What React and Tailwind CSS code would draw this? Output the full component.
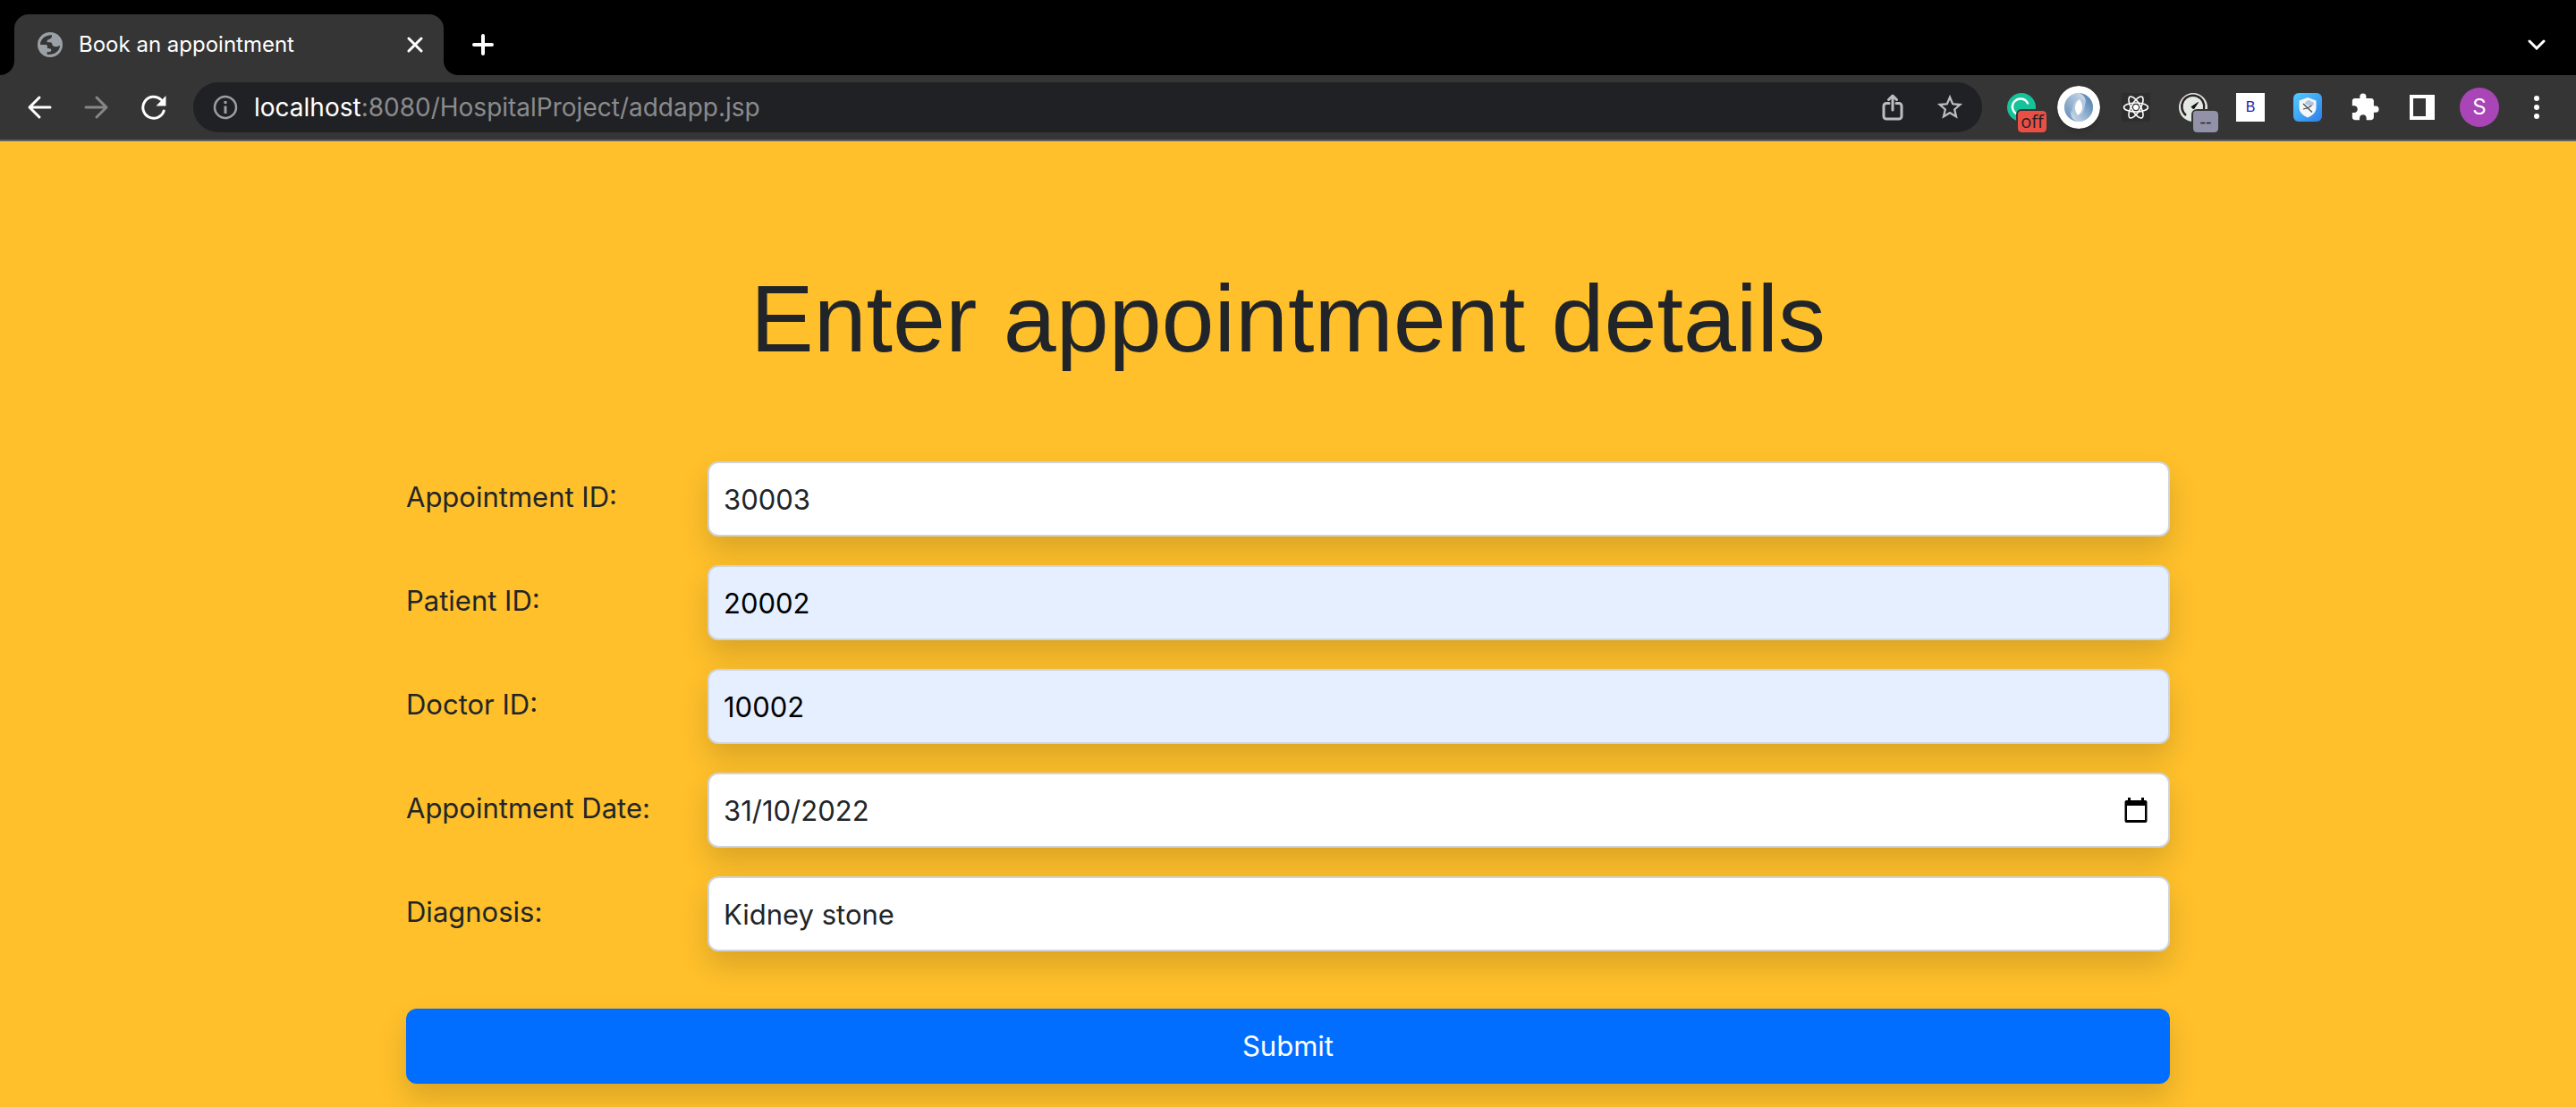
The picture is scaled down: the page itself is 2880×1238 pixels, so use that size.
import React from "react";

const FONT = "font-['Inter',sans-serif]";

function IconButton({ label, children }) {
  return (
    <button type="button" aria-label={label} className="relative flex h-14 w-16 shrink-0 items-center justify-center">
      {children}
    </button>
  );
}

function TabFoot({ flip }) {
  return (
    <svg width="16" height="16" viewBox="0 0 16 16" aria-hidden="true" className={flip ? "-scale-x-100" : ""}>
      <path d="M16 0v16H0A16 16 0 0 0 16 0Z" fill="#353535" />
    </svg>
  );
}

function TabStrip() {
  return (
    <div className="flex h-21 items-end bg-black pr-3">
      <TabFoot />
      <div className="flex h-17 w-120 items-center rounded-t-2xl bg-[#353535] pr-5 pl-6">
        <svg width="32" height="32" viewBox="-6 -6 96 96" aria-hidden="true">
          <circle cx="42" cy="42" r="42" fill="#9aa0a6" />
          <path d="M9 42C9 25 24 9 48 10Q50 20 38 24Q30 27 32 34H44Q50 36 50 44Q60 54 75 44C75 60 62 76 32 75V66Q46 68 46 60Q46 53 32 54Q36 42 26 42Z" fill="#353535" />
        </svg>
        <span className="ml-4 flex-1 text-2xl text-white">Book an appointment</span>
        <button type="button" aria-label="Close tab" className="flex h-6 w-6 items-center justify-center">
          <svg width="18" height="18" viewBox="0 0 18 18" stroke="#fff" strokeWidth="3" strokeLinecap="round">
            <path d="M2 2l14 14M16 2L2 16" />
          </svg>
        </button>
      </div>
      <TabFoot flip />
      <div className="flex h-17 flex-1 items-center justify-between">
        <button type="button" aria-label="New tab" className="flex h-14 w-14 items-center justify-center">
          <svg width="26" height="26" viewBox="0 0 26 26" stroke="#fff" strokeWidth="4" strokeLinecap="round">
            <path d="M13 3v20M3 13h20" />
          </svg>
        </button>
        <IconButton label="Search tabs">
          <svg width="20" height="12" viewBox="0 0 20 12" fill="none" stroke="#fff" strokeWidth="3" strokeLinecap="round">
            <path d="M2 2l8 8 8-8" />
          </svg>
        </IconButton>
      </div>
    </div>
  );
}

function Toolbar() {
  return (
    <div className="flex h-[74px] items-center border-b-2 border-[#5f6064] bg-[#353535] px-3">
      <IconButton label="Back">
        <svg width="28" height="28" viewBox="0 0 28 28" fill="none" stroke="#fff" strokeWidth="3" strokeLinecap="round" strokeLinejoin="round">
          <path d="M26 14H3M14 3L3 14l11 11" />
        </svg>
      </IconButton>
      <IconButton label="Forward">
        <svg width="28" height="28" viewBox="0 0 28 28" fill="none" stroke="#868686" strokeWidth="3" strokeLinecap="round" strokeLinejoin="round">
          <path d="M2 14h23M14 3l11 11-11 11" />
        </svg>
      </IconButton>
      <IconButton label="Reload">
        <svg width="28" height="28" viewBox="0 0 28 28" fill="none">
          <path d="M25.200 18A12 12 0 1 1 22 5.500" stroke="#fff" strokeWidth="3" strokeLinecap="round" />
          <path d="M27.500 1v11.500H16.500Z" fill="#fff" />
        </svg>
      </IconButton>
      <div className="mx-3 flex h-14 min-w-0 flex-1 items-center rounded-full bg-[#202124] pr-1 pl-1">
        <button type="button" aria-label="View site information" className="flex h-14 w-16 shrink-0 items-center justify-center">
          <svg width="28" height="28" viewBox="0 0 28 28" fill="none" stroke="#9aa0a6" strokeWidth="2.500">
            <circle cx="14" cy="14" r="12" />
            <path d="M14 12.500V21M14 7v3" strokeWidth="3" />
          </svg>
        </button>
        <a href="http://localhost:8080/HospitalProject/addapp.jsp" className="min-w-0 flex-1 truncate text-[28px] leading-10 text-[#8b8b8d]">
          <span className="text-white">localhost</span>:8080/HospitalProject/addapp.jsp
        </a>
        <IconButton label="Share">
          <svg width="24" height="30" viewBox="0 0 24 30" fill="none" stroke="#bdbdbe" strokeWidth="3" strokeLinecap="round" strokeLinejoin="round">
            <path d="M8 10.500H5a3 3 0 0 0-3 3V25a3 3 0 0 0 3 3h14a3 3 0 0 0 3-3V13.500a3 3 0 0 0-3-3h-3M12 18V2.500M7.500 6.500L12 2l4.500 4.500" />
          </svg>
        </IconButton>
        <IconButton label="Bookmark this tab">
          <svg width="34" height="34" viewBox="0 0 24 24" fill="#bdbdbe">
            <path d="M22 9.240l-7.190-.62L12 2 9.190 8.630 2 9.240l5.460 4.730L5.820 21 12 17.270 18.180 21l-1.630-7.030L22 9.240zM12 15.400l-3.760 2.270 1-4.280-3.320-2.880 4.380-.38L12 6.100l1.710 4.040 4.380.38-3.320 2.880 1 4.280L12 15.400z" />
          </svg>
        </IconButton>
      </div>
      <IconButton label="Grammarly">
        <svg width="32" height="32" viewBox="0 0 32 32" fill="none">
          <circle cx="16" cy="16" r="16" fill="#15c39a" />
          <path d="M23 11.500A9 9 0 1 0 12 24" stroke="#fff" strokeWidth="2.500" strokeLinecap="round" />
        </svg>
        <span className="absolute right-1 bottom-0 flex h-6 w-8 items-center justify-center rounded-sm bg-[#e94f45] font-['Open_Sans',sans-serif] text-xl leading-6 text-[#202124] outline-2 outline-[#353535]">off</span>
      </IconButton>
      <IconButton label="Loader">
        <svg width="48" height="48" viewBox="0 0 48 48" className="rounded-full shadow-md">
          <defs>
            <linearGradient id="swirlA" x1="0" y1="1" x2="1" y2="0"><stop offset="0" stopColor="#5f88b4" /><stop offset="1" stopColor="#d6e2ef" /></linearGradient>
            <linearGradient id="swirlB" x1="0" y1="1" x2="1" y2="0"><stop offset="0" stopColor="#d6e2ef" /><stop offset="1" stopColor="#3f74a8" /></linearGradient>
          </defs>
          <circle cx="24" cy="24" r="24" fill="#fff" />
          <circle cx="24" cy="24" r="16" fill="#b4c9df" />
          <path d="M25 8C14 8 8 16 8 24s6 15 15 16c-6-3-8-8-6-13 1-7 2-12 9-12 6 0 7 5 5 9 4-8 1-14-6-16Z" fill="url(#swirlA)" />
          <path d="M23 40c11 0 17-8 17-16S34 9 25 8c6 3 8 8 6 13-1 7-2 12-9 12-6 0-7-5-5-9-4 8-1 14 6 16Z" fill="url(#swirlB)" />
          <path d="M25 15c-4 3-5 6-5 9s1 6 3 9c4-3 5-6 5-9s-1-6-3-9Z" fill="#fff" />
        </svg>
      </IconButton>
      <IconButton label="React Developer Tools">
        <svg width="32" height="32" viewBox="0 0 32 32" fill="none" stroke="#fff" strokeWidth="1.600">
          <rect width="32" height="32" fill="#2e2e2e" stroke="none" />
          <ellipse cx="16" cy="16" rx="13.500" ry="5" />
          <ellipse cx="16" cy="16" rx="13.500" ry="5" transform="rotate(60 16 16)" />
          <ellipse cx="16" cy="16" rx="13.500" ry="5" transform="rotate(120 16 16)" />
          <circle cx="16" cy="16" r="3" fill="#fff" stroke="none" />
        </svg>
      </IconButton>
      <IconButton label="Page speed">
        <svg width="32" height="32" viewBox="0 0 32 32" fill="none">
          <circle cx="16" cy="16" r="16" fill="#e4e8e4" />
          <path d="M8 25A12.500 12.500 0 1 1 28 18" stroke="#2b2422" strokeWidth="2.500" />
          <path d="M21.500 10.500l-7.500 5 2.500 2.500Z" fill="#111" stroke="#111" />
        </svg>
        <span className="absolute right-1 bottom-0 flex h-6 w-7 items-center justify-center rounded-sm bg-[#9192a8] font-['Open_Sans',sans-serif] text-xl leading-6 text-[#202124] outline-2 outline-[#353535]">--</span>
      </IconButton>
      <IconButton label="B extension">
        <span className="flex h-8 w-8 items-center justify-center bg-white font-['Liberation_Sans',sans-serif] text-base text-[#2b22a8]">B</span>
      </IconButton>
      <IconButton label="Shield">
        <svg width="32" height="32" viewBox="0 0 32 32">
          <defs>
            <linearGradient id="shieldBg" x1="0" y1="0" x2="1" y2="1"><stop offset="0" stopColor="#52ccff" /><stop offset="1" stopColor="#2f7ee8" /></linearGradient>
          </defs>
          <rect width="32" height="32" rx="6" fill="url(#shieldBg)" />
          <path d="M16 5l9.500 3.500V16c0 6-4 9-9.500 11.500C10.500 25 6.500 22 6.500 16V8.500Z" fill="#f4f6f8" />
          <path d="M13 12a4 4 0 0 1 7-2.500c3 0 4 3 2 4.500h-5Z" fill="#b4c6de" />
          <path d="M11 12l10 9.500M11 18l4.500-1 5-3" fill="none" stroke="#3c4650" strokeWidth="1.200" />
        </svg>
      </IconButton>
      <IconButton label="Extensions">
        <svg width="34" height="34" viewBox="0 0 24 24" fill="#fff">
          <path d="M20.500 11H19V7c0-1.100-.9-2-2-2h-4V3.500a2.500 2.500 0 0 0-5 0V5H4c-1.100 0-1.990.9-1.990 2v3.800H3.500c1.490 0 2.700 1.210 2.700 2.700s-1.210 2.700-2.700 2.700H2V20c0 1.100.9 2 2 2h3.800v-1.500c0-1.490 1.210-2.700 2.700-2.700s2.700 1.210 2.700 2.700V22H17c1.100 0 2-.9 2-2v-4h1.500a2.500 2.500 0 0 0 0-5z" />
        </svg>
      </IconButton>
      <IconButton label="Side panel">
        <svg width="28" height="28" viewBox="0 0 28 28"><path d="M0 0h28v28H0ZM4 4v20h14V4Z" fill="#fff" fillRule="evenodd" /></svg>
      </IconButton>
      <IconButton label="Profile">
        <span className="flex h-11 w-11 items-center justify-center rounded-full bg-[#a945b6] text-2xl text-white">S</span>
      </IconButton>
      <IconButton label="Menu">
        <svg width="8" height="28" viewBox="0 0 8 28" fill="#fff"><circle cx="4" cy="4" r="3" /><circle cx="4" cy="14" r="3" /><circle cx="4" cy="24" r="3" /></svg>
      </IconButton>
    </div>
  );
}

const SHADOW = "shadow-[0_16px_32px_rgba(0,0,0,0.15)]";

const FIELDS = [
  { id: "appointment-id", label: "Appointment ID:", value: "30003" },
  { id: "patient-id", label: "Patient ID:", value: "20002", filled: true },
  { id: "doctor-id", label: "Doctor ID:", value: "10002", filled: true },
  { id: "appointment-date", label: "Appointment Date:", value: "31/10/2022", date: true },
  { id: "diagnosis", label: "Diagnosis:", value: "Kidney stone" },
];

function Field({ id, label, value, filled, date }) {
  return (
    <div className="grid grid-cols-[337px_1fr]">
      <label htmlFor={id} className="pt-4 text-[31px] leading-12">{label}</label>
      <div className="relative">
        <input
          id={id}
          type="text"
          defaultValue={value}
          className={`block h-21 w-full rounded-xl border-2 border-[#ced4da] px-4 text-[31px] ${SHADOW} ${filled ? "bg-[#e6efff] text-black" : "bg-white text-[#212529]"}`}
        />
        {date && (
          <button type="button" aria-label="Open calendar" className="absolute top-0 right-5 flex h-full w-9 items-center justify-center">
            <svg width="26" height="28" viewBox="0 0 26 28">
              <path d="M4 0h3v3h12V0h3v3h1.500a2 2 0 0 1 2 2v21a2 2 0 0 1-2 2h-21a2 2 0 0 1-2-2V5a2 2 0 0 1 2-2H4ZM3 9v16h20V9Z" fill="#000" fillRule="evenodd" />
            </svg>
          </button>
        )}
      </div>
    </div>
  );
}

export default function App() {
  return (
    <div className={`flex min-h-screen flex-col bg-[#ffc02b] ${FONT}`}>
      <header>
        <TabStrip />
        <Toolbar />
      </header>
      <main className="mx-auto w-full max-w-[1972px] flex-1 pb-[26px] text-[#212529]">
        <h1 className="pt-32 text-center font-['Liberation_Sans',sans-serif] text-[106px] leading-[140px]">Enter appointment details</h1>
        <form className="mt-[90px]" onSubmit={(e) => e.preventDefault()}>
          <div className="flex flex-col gap-8">
            {FIELDS.map((f) => <Field key={f.id} {...f} />)}
          </div>
          <button type="submit" className={`mt-16 h-21 w-full rounded-xl bg-[#026eff] text-[31px] text-white ${SHADOW}`}>Submit</button>
        </form>
      </main>
    </div>
  );
}
